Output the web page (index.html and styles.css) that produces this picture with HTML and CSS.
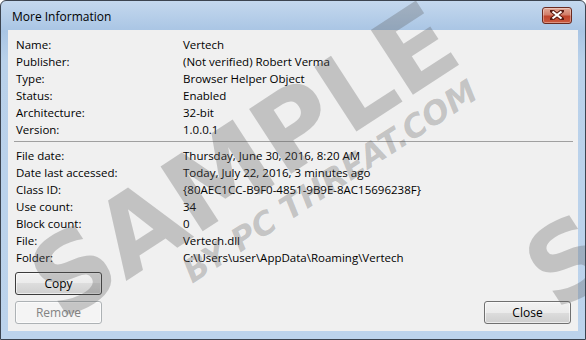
FILE: index.html
```html
<!DOCTYPE html>
<html>
<head>
  <title>More Information</title>
  <link rel="stylesheet" href="styles.css">
</head>
<body>

<div class="window">
  <div class="titlebar">
    <span class="title">More Information</span>
    <button class="close-x" title="Close">
      <svg width="14" height="10" viewBox="0 0 14 10">
        <path d="M2 1 L12 9 M12 1 L2 9" stroke="#5a1a12" stroke-width="4" stroke-linecap="square"/>
        <path d="M2.5 1.5 L11.5 8.5 M11.5 1.5 L2.5 8.5" stroke="#fff" stroke-width="2.2"/>
      </svg>
    </button>
  </div>

  <div class="client">
    <div class="props">
      <span>Name:</span><span>Vertech</span>
      <span>Publisher:</span><span>(Not verified) Robert Verma</span>
      <span>Type:</span><span>Browser Helper Object</span>
      <span>Status:</span><span>Enabled</span>
      <span>Architecture:</span><span>32-bit</span>
      <span>Version:</span><span>1.0.0.1</span>
    </div>

    <hr class="sep">

    <div class="props">
      <span>File date:</span><span>Thursday, June 30, 2016, 8:20 AM</span>
      <span>Date last accessed:</span><span>Today, July 22, 2016, 3 minutes ago</span>
      <span>Class ID:</span><span>{80AEC1CC-B9F0-4851-9B9E-8AC15696238F}</span>
      <span>Use count:</span><span>34</span>
      <span>Block count:</span><span>0</span>
      <span>File:</span><span>Vertech.dll</span>
      <span>Folder:</span><span>C:\Users\user\AppData\Roaming\Vertech</span>
    </div>

    <div class="actions">
      <div class="stack">
        <button class="btn default">Copy</button>
        <button class="btn" disabled>Remove</button>
      </div>
      <button class="btn">Close</button>
    </div>
  </div>

  <!-- watermark -->
  <div class="mark">SAMPLE</div>
  <div class="mark small">BY PC THREAT.COM</div>
  <div class="mark edge">S</div>
</div>

</body>
</html>
```

FILE: styles.css
```css
body {
  margin: 0;
  background: #fff;
  font-family: "Open Sans", "Noto Sans", sans-serif;
  font-size: 11.5px;
  color: #000;
}
.window {
  position: relative;
  overflow: hidden;
  box-sizing: content-box;
  width: 570px;
  height: 301px;
  padding: 29px 7px 8px 7px;
  border: 1px solid #3c4450;
  border-radius: 6px 6px 0 0;
  background: linear-gradient(#c4d8ee, #a9c5e4 30px, #b9d1ea 60px, #bcd3ec);
  display: flex;
  flex-direction: column;
}
.titlebar {
  position: absolute;
  top: 0;
  left: 0;
  right: 0;
  height: 29px;
  display: flex;
  align-items: center;
  padding: 0 13px 0 11px;
}
.title {
  flex: 1;
  font-size: 12px;
  margin-top: 2px;
  color: #000;
}
.close-x {
  width: 30px;
  height: 17px;
  margin-top: -1px;
  padding: 0;
  border: 1px solid #6a2a20;
  border-radius: 3px;
  background: linear-gradient(#e2a896, #d27d69 45%, #c0442c 55%, #cb5a3f);
  box-shadow: inset 0 0 0 1px rgba(255,255,255,0.35);
  display: flex;
  align-items: center;
  justify-content: center;
}
.client {
  flex: 1;
  background: #f0f0f0;
  display: flex;
  flex-direction: column;
  padding: 6px 7px 7px 7px;
}
.props {
  display: grid;
  grid-template-columns: 167px 1fr;
  line-height: 17px;
  padding-left: 1px;
}
.sep {
  border: 0;
  border-top: 1px solid #a0a0a0;
  margin: 3px -2px 5px -1px;
}
.actions {
  flex: 1;
  display: flex;
  justify-content: space-between;
  align-items: flex-end;
}
.stack {
  display: flex;
  flex-direction: column;
  gap: 6px;
}
.btn {
  width: 87px;
  height: 23px;
  font-family: inherit;
  font-size: 12px;
  color: #000;
  border: 1px solid #707070;
  border-radius: 3px;
  background: linear-gradient(#f2f2f2, #ebebeb 50%, #dddddd 50%, #cfcfcf);
  box-shadow: inset 0 0 0 1px rgba(255,255,255,0.6);
  padding: 0;
}
.btn.default {
  border-color: #3c3c3c;
}
.btn:disabled {
  color: #838383;
  border-color: #adb2b5;
  background: #f4f4f4;
}
.mark {
  position: absolute;
  left: 70px;
  top: 230px;
  font-family: "DejaVu Sans", sans-serif;
  font-weight: bold;
  font-size: 106px;
  line-height: 1;
  color: rgba(90, 90, 90, 0.3);
  transform: rotate(-33deg);
  transform-origin: left bottom;
  pointer-events: none;
  white-space: nowrap;
}
.mark.small {
  left: 194px;
  top: 255px;
  font-size: 32px;
  font-style: italic;
}
.mark.edge {
  left: 565px;
  top: 220px;
}
```
